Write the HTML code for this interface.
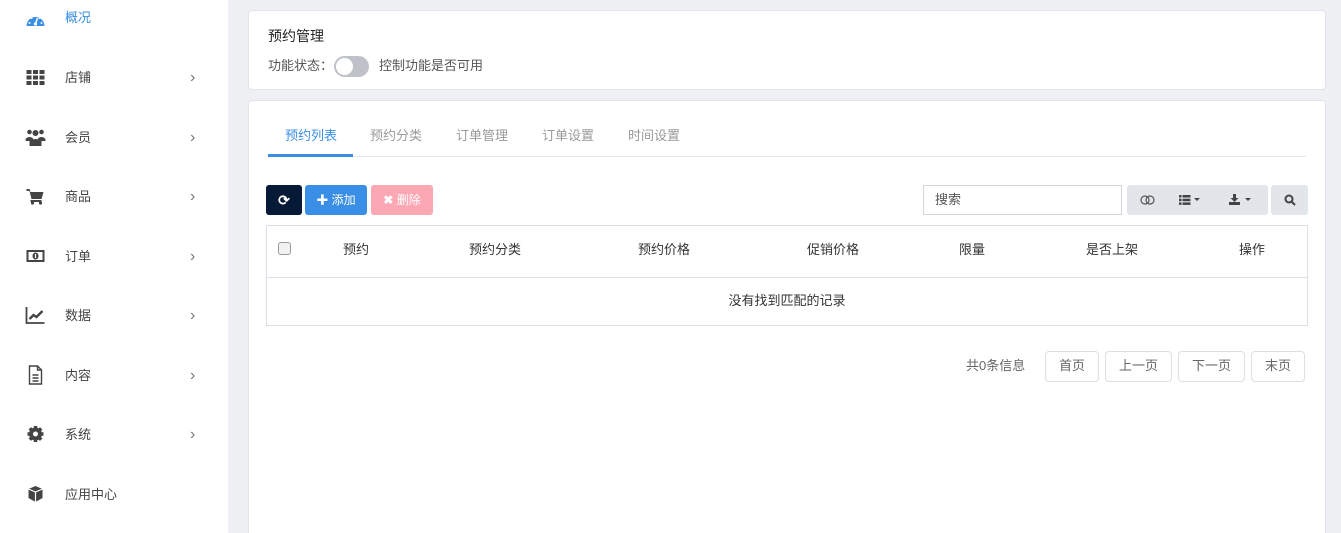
<!DOCTYPE html>
<html><head><meta charset="utf-8">
<style>
*{box-sizing:border-box;margin:0;padding:0}
html{width:1341px;height:533px;overflow:hidden}
body{width:1341px;height:533px;overflow:hidden;background:#eff0f4;font-family:"Liberation Sans","Noto Sans CJK SC",sans-serif;font-size:13px;color:#333;position:relative;line-height:1.2}
.side{position:absolute;left:0;top:0;width:228px;height:533px;background:#fff}
.it{position:absolute;left:0;width:228px;height:20px}
.it svg{position:absolute;left:25px;top:-2px;width:21px;height:20px}
.it .t{position:absolute;left:65px;top:0;line-height:18px;font-size:13px;color:#444}
.it .c{position:absolute;left:190px;top:0;line-height:18px;color:#777;font-size:16px}
.card{position:absolute;background:#fff;border:1px solid #e2e4e8;border-radius:4px}
.abs{position:absolute}
.btn{position:absolute;height:30px;border-radius:3px;color:#fff;font-size:12px;line-height:30px;text-align:center}
.pg{position:absolute;top:351px;height:31px;border:1px solid #dcdfe6;border-radius:4px;color:#666;font-size:13px;line-height:28px;text-align:center}
</style></head><body>
<div class="side">
  <div class="it" style="top:9px"><svg viewBox="0 0 20 20" style="top:1px"><path d="M1 16a9 9 0 0118 0z" fill="#3a8ee6"/><circle cx="10" cy="14" r="1.6" fill="#fff"/><path d="M10 14l2-6" stroke="#fff" stroke-width="1.5"/><circle cx="4" cy="13" r="1" fill="#fff"/><circle cx="16" cy="13" r="1" fill="#fff"/><circle cx="6" cy="8" r="1" fill="#fff"/><circle cx="10" cy="6" r="1" fill="#fff"/><circle cx="14" cy="8" r="1" fill="#fff"/></svg><span class="t" style="color:#3a8ee6">概况</span></div>
  <div class="it" style="top:69px"><svg viewBox="0 0 20 20" fill="#444"><rect x="1" y="3" width="5" height="4"/><rect x="7.5" y="3" width="5" height="4"/><rect x="14" y="3" width="5" height="4"/><rect x="1" y="8.5" width="5" height="4"/><rect x="7.5" y="8.5" width="5" height="4"/><rect x="14" y="8.5" width="5" height="4"/><rect x="1" y="14" width="5" height="4"/><rect x="7.5" y="14" width="5" height="4"/><rect x="14" y="14" width="5" height="4"/></svg><span class="t">店铺</span><span class="c">›</span></div>
  <div class="it" style="top:129px"><svg viewBox="0 0 20 20" fill="#444"><circle cx="4" cy="5" r="2.3"/><circle cx="16" cy="5" r="2.3"/><circle cx="10" cy="6" r="3"/><path d="M0 13a4 3 0 018 0v1H0z"/><path d="M12 13a4 3 0 018 0v1h-8z"/><path d="M4 18a6 6 0 0112 0z"/><rect x="4" y="14" width="12" height="5"/></svg><span class="t">会员</span><span class="c">›</span></div>
  <div class="it" style="top:188px"><svg viewBox="0 0 20 20" fill="#444"><path d="M1 3h3l1 3h13l-2 7H6L4 5H1z"/><rect x="5" y="14" width="11" height="2"/><circle cx="7" cy="17" r="1.6"/><circle cx="15" cy="17" r="1.6"/></svg><span class="t">商品</span><span class="c">›</span></div>
  <div class="it" style="top:248px"><svg viewBox="0 0 20 20"><rect x="1" y="4" width="18" height="12" fill="#444"/><rect x="3" y="6" width="14" height="8" fill="#fff"/><ellipse cx="10" cy="10" rx="3" ry="3.5" fill="#444"/><rect x="9.4" y="8" width="1.2" height="4" fill="#fff"/></svg><span class="t">订单</span><span class="c">›</span></div>
  <div class="it" style="top:307px"><svg viewBox="0 0 20 20" fill="none" stroke="#444" stroke-width="1.8"><path d="M1 2v16h18"/><path d="M4 14l4-4 3 2 6-6" stroke-width="2.4"/></svg><span class="t">数据</span><span class="c">›</span></div>
  <div class="it" style="top:367px"><svg viewBox="0 0 20 20" fill="none" stroke="#444" stroke-width="1.4"><path d="M4 1h8l4 4v14H4z"/><path d="M12 1v4h4M7 10h6M7 13h6M7 16h6"/></svg><span class="t">内容</span><span class="c">›</span></div>
  <div class="it" style="top:426px"><svg viewBox="0 0 20 20"><circle cx="10" cy="10" r="6.5" fill="#444"/><g stroke="#444" stroke-width="3.5"><path d="M10 2v16M2 10h16M4.3 4.3l11.4 11.4M15.7 4.3L4.3 15.7"/></g><circle cx="10" cy="10" r="2.5" fill="#fff"/></svg><span class="t">系统</span><span class="c">›</span></div>
  <div class="it" style="top:486px"><svg viewBox="0 0 20 20"><path d="M10 2l7 3v9l-7 4-7-4V5z" fill="#444"/><path d="M3 5l7 3 7-3" stroke="#fff" stroke-width="1.2" fill="none"/><path d="M10 8v10" stroke="#fff" stroke-width="1.2"/></svg><span class="t">应用中心</span></div>
</div>

<div class="card" style="left:248px;top:10px;width:1078px;height:80px">
  <div class="abs" style="left:19px;top:17px;font-size:14px;color:#222">预约管理</div>
  <div class="abs" style="left:19px;top:47px;font-size:13px;color:#555">功能状态：</div>
  <div class="abs" style="left:85px;top:45px;width:35px;height:21px;border-radius:11px;background:#bfc2c8"><div style="position:absolute;left:2px;top:2px;width:17px;height:17px;border-radius:50%;background:#fff"></div></div>
  <div class="abs" style="left:130px;top:47px;font-size:13px;color:#555">控制功能是否可用</div>
</div>

<div class="card" style="left:248px;top:100px;width:1078px;height:445px">
  <div class="abs" style="left:19px;top:55px;width:1038px;height:1px;background:#e4e7ed"></div>
  <div class="abs" style="left:19px;top:53px;width:85px;height:3px;background:#3a8ee6"></div>
  <div class="abs" style="left:36px;top:27px;color:#3a8ee6">预约列表</div>
  <div class="abs" style="left:121px;top:27px;color:#999">预约分类</div>
  <div class="abs" style="left:207px;top:27px;color:#999">订单管理</div>
  <div class="abs" style="left:293px;top:27px;color:#999">订单设置</div>
  <div class="abs" style="left:379px;top:27px;color:#999">时间设置</div>
</div>

<div class="btn" style="left:266px;top:185px;width:36px;background:#061a38;font-weight:bold;font-size:14px">⟳</div>
<div class="btn" style="left:305px;top:185px;width:62px;background:#3a8ee6"><b>✚</b> 添加</div>
<div class="btn" style="left:371px;top:185px;width:62px;background:#fba7b4"><b>✖</b> 删除</div>

<div class="abs" style="left:923px;top:185px;width:199px;height:30px;border:1px solid #d4d6de;padding-left:11px;line-height:27px;color:#555">搜索</div>
<div class="abs" style="left:1127px;top:185px;width:141px;height:30px;background:#e2e5e9;border-radius:3px;color:#444">
  <svg class="abs" style="left:13px;top:10px" width="15" height="10" viewBox="0 0 15 10" fill="none" stroke="#555" stroke-width="1.2"><circle cx="5" cy="5" r="4"/><circle cx="10" cy="5" r="4"/></svg>
  <svg class="abs" style="left:52px;top:10px" width="24" height="10" viewBox="0 0 24 10" fill="#444"><rect x="0" y="0" width="2.5" height="2.5"/><rect x="3.5" y="0" width="8" height="2.5"/><rect x="0" y="3.7" width="2.5" height="2.5"/><rect x="3.5" y="3.7" width="8" height="2.5"/><rect x="0" y="7.4" width="2.5" height="2.5"/><rect x="3.5" y="7.4" width="8" height="2.5"/><path d="M15 3h6l-3 3z"/></svg>
  <svg class="abs" style="left:102px;top:9px" width="26" height="12" viewBox="0 0 26 12" fill="#444"><path d="M4 0h3v4h2.5L5.5 8 1.5 4H4z"/><rect x="0" y="8" width="11" height="3"/><path d="M16 4h6l-3 3z"/></svg>
</div>
<div class="abs" style="left:1271px;top:185px;width:37px;height:30px;background:#e2e5e9;border-radius:3px">
  <svg class="abs" style="left:13px;top:9px" width="12" height="12" viewBox="0 0 12 12" fill="none" stroke="#444" stroke-width="2"><circle cx="5" cy="5" r="3.5"/><path d="M7.5 7.5L11 11"/></svg>
</div>

<div class="abs" style="left:266px;top:225px;width:1042px;height:101px;border:1px solid #dcdfe6">
  <div class="abs" style="left:0;top:51px;width:1040px;height:1px;background:#dcdfe6"></div>
  <div class="abs" style="left:11px;top:16px;width:13px;height:13px;border:1px solid #999;border-radius:3px;background:#f2f2f2"></div>
  <div class="abs" style="left:76px;top:16px">预约</div>
  <div class="abs" style="left:202px;top:16px">预约分类</div>
  <div class="abs" style="left:371px;top:16px">预约价格</div>
  <div class="abs" style="left:540px;top:16px">促销价格</div>
  <div class="abs" style="left:692px;top:16px">限量</div>
  <div class="abs" style="left:819px;top:16px">是否上架</div>
  <div class="abs" style="left:972px;top:16px">操作</div>
  <div class="abs" style="left:0;top:67px;width:1040px;text-align:center">没有找到匹配的记录</div>
</div>

<div class="abs" style="left:966px;top:358px;color:#666">共0条信息</div>
<div class="pg" style="left:1045px;width:54px">首页</div>
<div class="pg" style="left:1105px;width:67px">上一页</div>
<div class="pg" style="left:1178px;width:67px">下一页</div>
<div class="pg" style="left:1251px;width:54px">末页</div>
</body></html>
